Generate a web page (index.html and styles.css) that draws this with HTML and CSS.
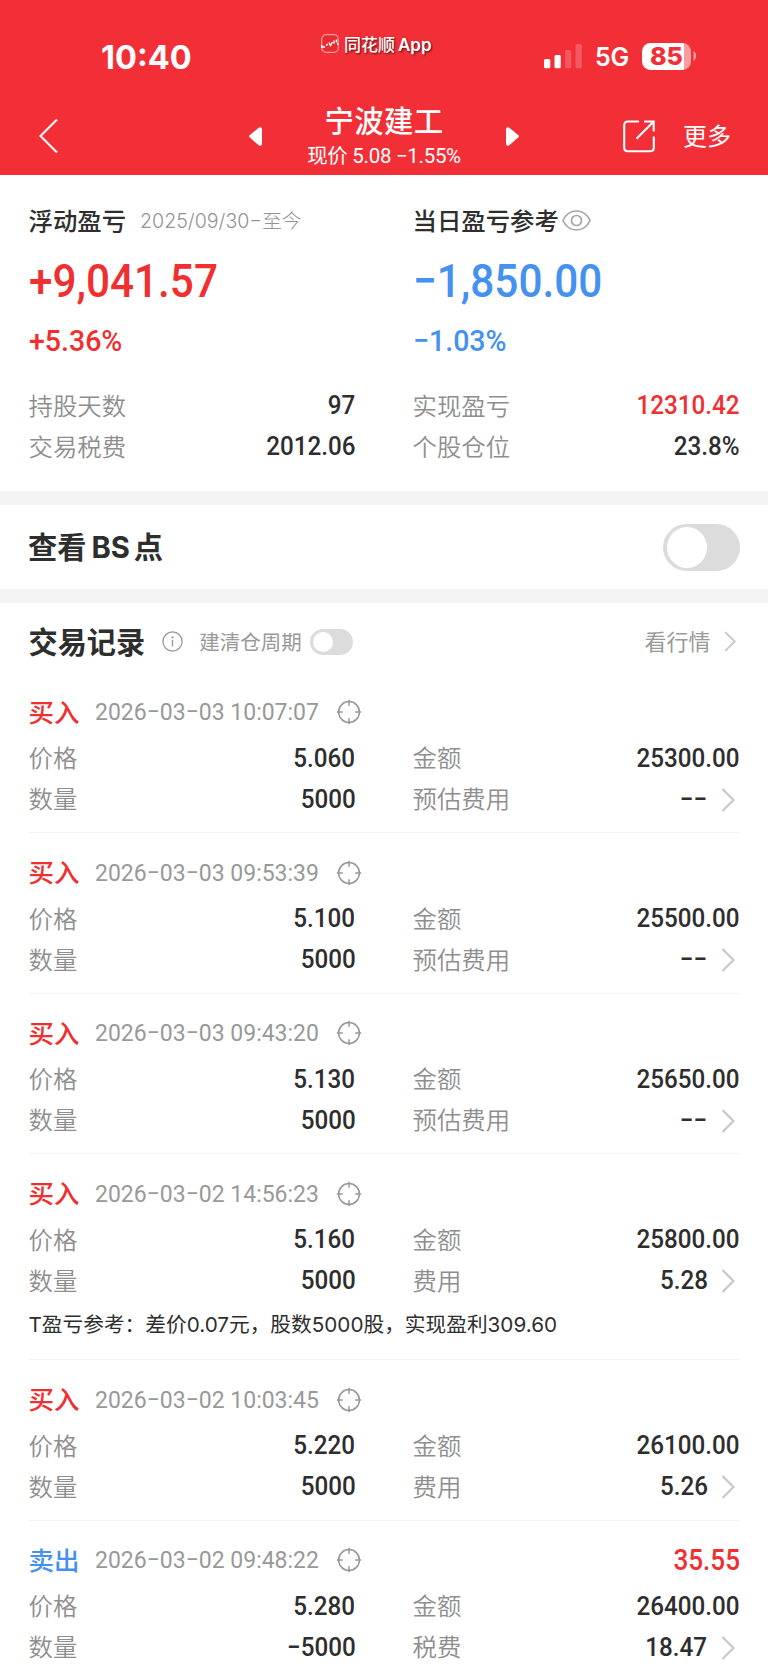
FILE: index.html
```html
<!DOCTYPE html>
<html lang="zh-CN">
<head>
<meta charset="utf-8">
<title>宁波建工</title>
<link rel="stylesheet" href="styles.css">
</head>
<body>
<svg class="defs" width="0" height="0">
  <symbol id="target" viewBox="0 0 26 26"><g fill="none" stroke="#999" stroke-width="1.5"><circle cx="13" cy="13" r="10.4"/><path d="M13 .8v6M13 19.200v6M.8 13h6M19.200 13h6"/></g></symbol>
  <symbol id="chev" viewBox="0 0 14 24"><path d="M1.500 1l11 11-11 11" fill="none" stroke="#c8c8c8" stroke-width="2.200"/></symbol>
</svg>
<header class="header">
  <div class="status">
    <div class="time">10:40</div>
    <div class="brand">
      <svg width="18" height="19" viewBox="0 0 18 19"><rect x=".7" y=".7" width="16.600" height="17.600" rx="4.500" fill="#e92b32" stroke="#ff9a9d" stroke-width="1.200"/><path d="M.8 11v3M1 12.500l3 .8M5 11.500l2-1.500M8 8.500l1.500 3 2-3.500" fill="none" stroke="#fff" stroke-width="1.400"/><path d="M13 6.500v3M15.500 5.500v3M16.800 9v2" stroke="#fff" stroke-width="1.500"/></svg>
      <span>同花顺<b>App</b></span>
    </div>
    <div class="signals">
      <svg width="38" height="25" viewBox="0 0 38 25" fill="#fff"><rect x="0" y="15" width="6.300" height="9.300" rx="1.600"/><rect x="10.500" y="11" width="6.300" height="13.300" rx="1.600"/><rect x="21" y="6" width="6.300" height="18.300" rx="1.600" opacity=".2"/><rect x="31.500" y="0" width="6.300" height="24.300" rx="1.600" opacity=".2"/></svg>
      <span class="net">5G</span>
      <div class="battery"><span class="level">85</span><svg width="4" height="10" viewBox="0 0 4 10"><path d="M.5 .3C4 1.500 4 8.500 .5 9.700z" fill="#f89da1"/></svg></div>
    </div>
  </div>
  <div class="nav">
    <svg class="back" width="20" height="36" viewBox="0 0 20 36"><path d="M19 1.500L2.500 18l16.500 16.500" fill="none" stroke="#fff" stroke-width="2"/></svg>
    <div class="switcher">
      <svg width="15" height="21" viewBox="0 0 15 21"><path d="M11 1.500L1.600 9.300q-1 1 0 2L11 19.500q3 1 3-2v-14q0-3-3-2z" fill="#fff"/></svg>
      <div class="stock"><div class="name">宁波建工</div><div class="price">现价 5.08 −1.55%</div></div>
      <svg width="15" height="21" viewBox="0 0 15 21"><path d="M4 1.500l9.400 7.800q1 1 0 2L4 19.500q-3 1-3-2v-14q0-3 3-2z" fill="#fff"/></svg>
    </div>
    <div class="actions">
      <svg width="32" height="33" viewBox="0 0 32 33" fill="none" stroke="#fff" stroke-width="2.100"><path d="M16 1.500H5Q1.200 1.500 1.200 5.300V27.500Q1.200 31.300 5 31.300H27Q30.800 31.300 30.800 27.500V16.500M21 1.500h9.700V11.500M30.200 2L13.500 18.700"/></svg>
      <span>更多</span>
    </div>
  </div>
</header>

<section class="summary">
  <div class="col">
    <div class="head"><span class="heading">浮动盈亏</span><span class="range">2025/09/30−至今</span></div>
    <div class="big up">+9,041.57</div>
    <div class="pct up">+5.36%</div>
    <div class="row"><span class="label">持股天数</span><span class="num">97</span></div>
    <div class="row"><span class="label">交易税费</span><span class="num">2012.06</span></div>
  </div>
  <div class="col">
    <div class="head"><span class="heading">当日盈亏参考</span><svg class="eye" width="29" height="21" viewBox="0 0 29 21" fill="none" stroke="#a6a6a6" stroke-width="1.700"><path d="M1 10.500C4 4 9 1 14.500 1S25 4 28 10.500C25 17 20 20 14.500 20S4 17 1 10.500z"/><circle cx="14.500" cy="10.500" r="5"/></svg></div>
    <div class="big down">−1,850.00</div>
    <div class="pct down">−1.03%</div>
    <div class="row"><span class="label">实现盈亏</span><span class="num up">12310.42</span></div>
    <div class="row"><span class="label">个股仓位</span><span class="num">23.8%</span></div>
  </div>
</section>

<section class="bs"><h2 class="title">查看<span class="latin">BS</span>点</h2><div class="toggle"></div></section>

<section class="records">
  <div class="records-head">
    <h2 class="title">交易记录</h2>
    <svg class="info" width="21" height="21" viewBox="0 0 21 21"><circle cx="10.500" cy="10.500" r="9.600" fill="none" stroke="#999" stroke-width="1.300"/><path d="M10.500 9v6.500" stroke="#999" stroke-width="1.400"/><circle cx="10.500" cy="6.300" r="1.100" fill="#999"/></svg>
    <span class="cycle">建清仓周期</span>
    <div class="toggle small"></div>
    <span class="quote">看行情</span>
    <svg class="quote-chev" width="12" height="21"><use href="#chev"/></svg>
  </div>

  <article class="record">
    <div class="top"><span class="side up">买入</span><span class="date">2026−03−03 10:07:07</span><svg width="26" height="26"><use href="#target"/></svg></div>
    <div class="grid">
      <div class="row"><span class="label">价格</span><span class="num">5.060</span></div>
      <div class="row"><span class="label">金额</span><span class="num">25300.00</span></div>
      <div class="row"><span class="label">数量</span><span class="num">5000</span></div>
      <div class="row"><span class="label">预估费用</span><span class="num dash">−−</span><svg class="chev" width="14" height="24"><use href="#chev"/></svg></div>
    </div>
  </article>
  <article class="record">
    <div class="top"><span class="side up">买入</span><span class="date">2026−03−03 09:53:39</span><svg width="26" height="26"><use href="#target"/></svg></div>
    <div class="grid">
      <div class="row"><span class="label">价格</span><span class="num">5.100</span></div>
      <div class="row"><span class="label">金额</span><span class="num">25500.00</span></div>
      <div class="row"><span class="label">数量</span><span class="num">5000</span></div>
      <div class="row"><span class="label">预估费用</span><span class="num dash">−−</span><svg class="chev" width="14" height="24"><use href="#chev"/></svg></div>
    </div>
  </article>
  <article class="record">
    <div class="top"><span class="side up">买入</span><span class="date">2026−03−03 09:43:20</span><svg width="26" height="26"><use href="#target"/></svg></div>
    <div class="grid">
      <div class="row"><span class="label">价格</span><span class="num">5.130</span></div>
      <div class="row"><span class="label">金额</span><span class="num">25650.00</span></div>
      <div class="row"><span class="label">数量</span><span class="num">5000</span></div>
      <div class="row"><span class="label">预估费用</span><span class="num dash">−−</span><svg class="chev" width="14" height="24"><use href="#chev"/></svg></div>
    </div>
  </article>
  <article class="record">
    <div class="top"><span class="side up">买入</span><span class="date">2026−03−02 14:56:23</span><svg width="26" height="26"><use href="#target"/></svg></div>
    <div class="grid">
      <div class="row"><span class="label">价格</span><span class="num">5.160</span></div>
      <div class="row"><span class="label">金额</span><span class="num">25800.00</span></div>
      <div class="row"><span class="label">数量</span><span class="num">5000</span></div>
      <div class="row"><span class="label">费用</span><span class="num">5.28</span><svg class="chev" width="14" height="24"><use href="#chev"/></svg></div>
    </div>
    <div class="note">T盈亏参考：差价0.07元，股数5000股，实现盈利309.60</div>
  </article>
  <article class="record">
    <div class="top"><span class="side up">买入</span><span class="date">2026−03−02 10:03:45</span><svg width="26" height="26"><use href="#target"/></svg></div>
    <div class="grid">
      <div class="row"><span class="label">价格</span><span class="num">5.220</span></div>
      <div class="row"><span class="label">金额</span><span class="num">26100.00</span></div>
      <div class="row"><span class="label">数量</span><span class="num">5000</span></div>
      <div class="row"><span class="label">费用</span><span class="num">5.26</span><svg class="chev" width="14" height="24"><use href="#chev"/></svg></div>
    </div>
  </article>
  <article class="record">
    <div class="top"><span class="side down">卖出</span><span class="date">2026−03−02 09:48:22</span><svg width="26" height="26"><use href="#target"/></svg><span class="profit up">35.55</span></div>
    <div class="grid">
      <div class="row"><span class="label">价格</span><span class="num">5.280</span></div>
      <div class="row"><span class="label">金额</span><span class="num">26400.00</span></div>
      <div class="row"><span class="label">数量</span><span class="num">−5000</span></div>
      <div class="row"><span class="label">税费</span><span class="num">18.47</span><svg class="chev" width="14" height="24"><use href="#chev"/></svg></div>
    </div>
  </article>
</section>
</body>
</html>
```

FILE: styles.css
```css
* { box-sizing: border-box; }
html { background: #fff; }
body {
  margin: 0;
  width: 768px;
  height: 1669px;
  overflow: hidden;
  background: #fff;
  color: #2e2e2e;
  font-family: Roboto, "Noto Sans CJK SC", sans-serif;
}
svg { display: block; flex: none; }
.defs { position: absolute; }
.up { color: #f02f30; }
.down { color: #4591f0; }

.header { height: 175px; background: #f22f37; color: #fff; }
.status { height: 98px; display: grid; grid-template-columns: 321px 1fr 224px; }
.time { padding: 36px 0 0 101px; font: 700 32.500px/44px Inter, sans-serif; }
.brand { display: flex; gap: 5px; height: 19px; margin-top: 34px; font: 500 17px/20px "Noto Sans CJK SC", sans-serif; text-shadow: 1px 1px 2px rgba(60, 0, 0, .8); white-space: nowrap; }
.brand b { margin-left: 3px; font: 600 17px/20px Inter, sans-serif; }
.signals { display: flex; align-items: center; height: 26px; margin-top: 43px; }
.net { width: 37px; margin: 2px 0 0 13px; font: 600 25px/26px Inter, sans-serif; letter-spacing: -.3px; }
.battery { display: flex; align-items: center; gap: 2px; margin-left: 10px; }
.level { width: 49px; height: 27px; padding-left: 8px; border-radius: 8.500px; background: linear-gradient(90deg, #fff 42px, #f89da1 42px); color: #f22f37; font: 800 25px/27px Inter, sans-serif; letter-spacing: -.2px; }

.nav { display: grid; grid-template-columns: 248px 272px 1fr; height: 77px; }
.back { margin: 20px 0 0 38px; }
.switcher { display: flex; justify-content: space-between; }
.switcher > svg { margin-top: 28px; }
.stock { text-align: center; white-space: nowrap; }
.name { font: 500 29.400px/38px "Noto Sans CJK SC", sans-serif; margin-top: 2px; letter-spacing: .3px; }
.price { font-size: 20.500px; line-height: 28px; margin-top: 4px; letter-spacing: -.3px; }
.actions { display: flex; padding: 22px 0 0 103px; gap: 28px; font-size: 24px; line-height: 34px; }

.summary { display: grid; grid-template-columns: 327px 327px; column-gap: 57px; height: 316px; padding: 22px 0 0 28.500px; }
.head { display: flex; align-items: center; height: 47px; white-space: nowrap; }
.heading { margin-bottom: 3px; font-size: 24.400px; font-weight: 500; }
.range { margin-left: 14px; color: #949494; font: 300 19.600px/28px Inter, "Noto Sans CJK SC", sans-serif; }
.eye { margin-left: 3px; }
.big { height: 74px; font-size: 47px; font-weight: 500; line-height: 74px; transform: scaleX(.9); transform-origin: left; }
.pct { height: 46px; margin-bottom: 21.500px; font-size: 30px; font-weight: 500; line-height: 46px; transform: scaleX(.95); transform-origin: left; }
.row { display: flex; align-items: center; height: 41px; }
.label { margin-right: auto; color: #8e8e8e; font-size: 24.400px; font-weight: 350; line-height: 41px; }
.num { margin-bottom: 1px; font-size: 26.700px; font-weight: 500; line-height: 41px; transform: scaleX(.907); transform-origin: right; }

.bs { display: flex; justify-content: space-between; align-items: center; height: 112px; padding: 0 28px; border: solid #f4f4f4; border-width: 14px 0; }
.title { margin: 0 0 1px; font: 700 29.200px/40px "Noto Sans CJK SC", sans-serif; white-space: nowrap; }
.latin { margin: 0 4px 0 5px; font-family: Inter, sans-serif; }
.toggle { width: 77px; height: 47px; border-radius: 24px; background: #dcdcdc; padding: 3px 4px; }
.toggle::before { content: ""; display: block; width: 40px; height: 41px; border-radius: 50%; background: #fff; }
.toggle.small { width: 43px; height: 26px; padding: 3px; }
.toggle.small::before { width: 20px; height: 20px; }

.records { padding: 0 28.500px; }
.records-head { display: flex; align-items: center; height: 69.500px; padding-top: 8px; color: #999; white-space: nowrap; }
.records-head .title { color: #2e2e2e; margin-bottom: 4px; }
.info { margin-left: 17px; }
.cycle { margin: 0 0 1px 16px; font-size: 20.500px; }
.records-head .toggle { margin-left: 8px; }
.quote { margin: 0 0 3px auto; font-size: 22px; }
.quote-chev { margin: 0 4px 0 13px; }
.record { border-bottom: 1px solid #f3f3f3; padding: 13.500px 0 12px; }
.top { display: flex; align-items: center; height: 52px; }
.side { width: 66px; margin-bottom: 4px; font-size: 25.500px; font-weight: 500; }
.date { width: 228px; margin: 0 13px 1px 0; color: #999; font-size: 24.500px; white-space: nowrap; transform: scaleX(.938); transform-origin: left; }
.profit { margin-left: auto; font-size: 29px; font-weight: 500; transform: scaleX(.9); transform-origin: right; }
.grid { display: grid; grid-template-columns: 327px 327px; column-gap: 57px; }
.chev { margin: 0 5px 0 13px; }
.note { height: 45.500px; font: 400 20.700px/46px Inter, "Noto Sans CJK SC", sans-serif; white-space: nowrap; }
```
